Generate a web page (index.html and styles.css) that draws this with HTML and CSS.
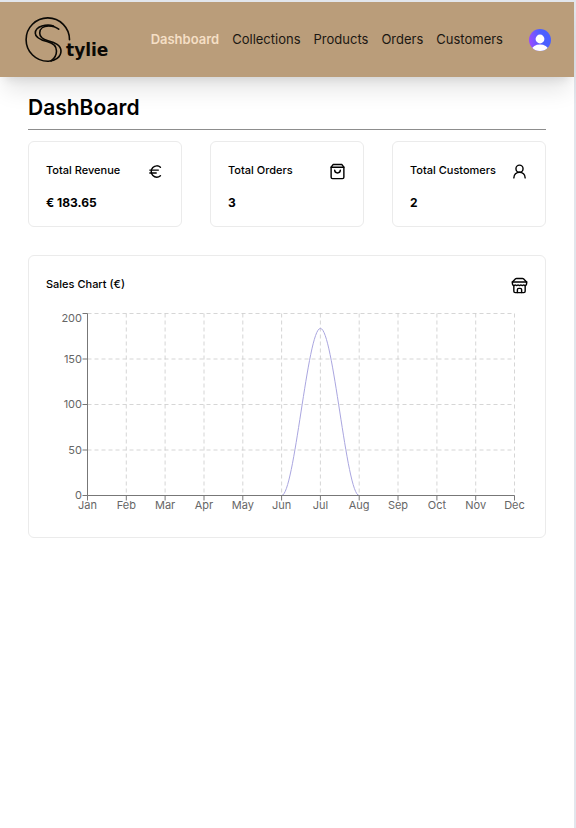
FILE: index.html
```html
<!DOCTYPE html>
<html lang="en">
<head>
<meta charset="utf-8">
<meta name="viewport" content="width=device-width, initial-scale=1">
<title>Stylie Dashboard</title>
<link rel="stylesheet" href="styles.css">
</head>
<body>
<div class="app">
  <header class="topbar">
    <a class="logo" href="#" aria-label="Stylie">
      <svg class="logo-mark" viewBox="0 0 46 46" fill="none" stroke="currentColor" stroke-width="1.6" stroke-linecap="round" aria-hidden="true">
        <path d="M44.500 22.800A21.700 21.700 0 1 0 23 44.300C30 44.500 36 40 36 34C36 28 30 25.800 23 23.800C17.500 22.200 14.700 19.500 14.700 16C14.700 11.500 18.500 9 23.700 9C28 9 31 10 33.700 12.200"/>
        <path d="M28.500 9C22 6.800 10.300 9 10.300 16.300C10.300 20.500 15 22.800 22 24.500C28 26 31.500 29.500 31.500 34C31.500 38.500 29.500 41.500 26 44"/>
      </svg>
      <span class="logo-text">tylie</span>
    </a>
    <nav class="nav">
      <a class="active" href="#">Dashboard</a>
      <a href="#">Collections</a>
      <a href="#">Products</a>
      <a href="#">Orders</a>
      <a href="#">Customers</a>
    </nav>
    <button class="avatar" type="button" aria-label="Account">
      <svg viewBox="0 0 22 22" aria-hidden="true">
        <defs>
          <linearGradient id="tint" x1="0" x2="1" y1="0.600" y2="0.400"><stop offset="0" stop-color="#9b4bff"/><stop offset="0.600" stop-color="#4a60ff"/></linearGradient>
          <clipPath id="disc"><circle cx="11" cy="11" r="11"/></clipPath>
        </defs>
        <g clip-path="url(#disc)">
          <rect width="22" height="22" fill="url(#tint)"/>
          <circle cx="11" cy="10" r="4.400" fill="#fff"/>
          <ellipse cx="11" cy="20.500" rx="8" ry="5" fill="#fff"/>
        </g>
      </svg>
    </button>
  </header>
  <main class="content">
    <h1>DashBoard</h1>
    <hr>
    <section class="stats">
      <article class="card">
        <div class="card-head">
          <h2>Total Revenue</h2>
          <svg class="icon" viewBox="0 0 24 24" aria-hidden="true"><path d="M4 10h12M4 14h9"/><path d="M19 6a7.700 7.700 0 0 0-5.200-2A7.900 7.900 0 0 0 6 12c0 4.400 3.500 8 7.800 8 2 0 3.800-.8 5.200-2"/></svg>
        </div>
        <p>€ 183.65</p>
      </article>
      <article class="card">
        <div class="card-head">
          <h2>Total Orders</h2>
          <svg class="icon" viewBox="0 0 24 24" aria-hidden="true"><path d="M6 2 3 6v14a2 2 0 0 0 2 2h14a2 2 0 0 0 2-2V6l-3-4Z"/><path d="M3 6h18"/><path d="M16 10a4 4 0 0 1-8 0"/></svg>
        </div>
        <p>3</p>
      </article>
      <article class="card">
        <div class="card-head">
          <h2>Total Customers</h2>
          <svg class="icon" viewBox="0 0 24 24" aria-hidden="true"><circle cx="12" cy="8" r="5"/><path d="M20 21a8 8 0 0 0-16 0"/></svg>
        </div>
        <p>2</p>
      </article>
    </section>
    <section class="card chart-card">
      <div class="card-head">
        <h2>Sales Chart (€)</h2>
        <svg class="icon" viewBox="0 0 24 24" aria-hidden="true"><path d="m2 7 4.410-4.410A2 2 0 0 1 7.830 2h8.340a2 2 0 0 1 1.420.590L22 7"/><path d="M4 12v8a2 2 0 0 0 2 2h12a2 2 0 0 0 2-2v-8"/><path d="M15 22v-4a2 2 0 0 0-2-2h-2a2 2 0 0 0-2 2v4"/><path d="M2 7h20"/><path d="M22 7v3a2 2 0 0 1-2 2 2.700 2.700 0 0 1-1.590-.630.700.700 0 0 0-.820 0A2.700 2.700 0 0 1 16 12a2.700 2.700 0 0 1-1.590-.630.700.700 0 0 0-.820 0A2.700 2.700 0 0 1 12 12a2.700 2.700 0 0 1-1.590-.630.700.700 0 0 0-.820 0A2.700 2.700 0 0 1 8 12a2.700 2.700 0 0 1-1.590-.630.700.700 0 0 0-.820 0A2.700 2.700 0 0 1 4 12a2 2 0 0 1-2-2V7"/></svg>
      </div>
      <svg class="chart" viewBox="0 0 482 214" role="img" aria-label="Sales by month">
        <path class="grid" d="M41.500 5.500H468.500M41.500 51H468.500M41.500 96.500H468.500M41.500 142H468.500"/>
        <path class="grid" d="M80.300 5.500V187.500M119.100 5.500V187.500M158 5.500V187.500M196.800 5.500V187.500M235.600 5.500V187.500M274.400 5.500V187.500M313.200 5.500V187.500M352 5.500V187.500M390.900 5.500V187.500M429.700 5.500V187.500M468.500 5.500V187.500"/>
        <path class="line" d="M41.500 187.500H235.600C248.500 187.500 261.500 20.400 274.400 20.400C287.300 20.400 300.300 187.500 313.200 187.500H468.500"/>
        <path class="axis" d="M41.500 5.500V187.500H468.500M36.500 5.500h5M36.500 51h5M36.500 96.500h5M36.500 142h5M36.500 187.500h5"/>
        <path class="axis" d="M41.500 187.500v5M80.300 187.500v5M119.100 187.500v5M158 187.500v5M196.800 187.500v5M235.600 187.500v5M274.400 187.500v5M313.200 187.500v5M352 187.500v5M390.900 187.500v5M429.700 187.500v5M468.500 187.500v5"/>
        <g class="y-labels">
          <text x="36" y="14">200</text><text x="36" y="55">150</text><text x="36" y="100">100</text><text x="36" y="146">50</text><text x="36" y="191">0</text>
        </g>
        <g class="x-labels">
          <text x="41.500" y="201">Jan</text><text x="80.300" y="201">Feb</text><text x="119.100" y="201">Mar</text><text x="158" y="201">Apr</text><text x="196.800" y="201">May</text><text x="235.600" y="201">Jun</text><text x="274.400" y="201">Jul</text><text x="313.200" y="201">Aug</text><text x="352" y="201">Sep</text><text x="390.900" y="201">Oct</text><text x="429.700" y="201">Nov</text><text x="468.500" y="201">Dec</text>
        </g>
      </svg>
    </section>
  </main>
</div>
</body>
</html>
```
FILE: styles.css
```css
* { box-sizing: border-box; }

body {
  margin: 0;
  font-family: Inter, "Liberation Sans", sans-serif;
  color: #020817;
  background: #fff;
}

.app {
  min-height: 100vh;
  border-top: 2px solid #e2e6ec;
  border-right: 2px solid #e2e6ec;
}

.topbar {
  display: flex;
  align-items: center;
  height: 75px;
  padding: 0 23px 0 25px;
  background: #ba9d7a;
  box-shadow: 0 18px 22px -5px rgba(0, 0, 0, 0.100), 0 7px 9px -5px rgba(0, 0, 0, 0.100);
}

.logo {
  display: flex;
  align-items: center;
  color: #0b0905;
  text-decoration: none;
}

.logo-mark { width: 46px; height: 46px; }

.logo-text {
  margin: 20px 0 0 -5px;
  font: bold 17px/20px "DejaVu Sans", sans-serif;
}

.nav {
  display: flex;
  gap: 13px;
  margin-left: auto;
  padding-bottom: 1px;
  font-size: 13px;
  line-height: 20px;
}

.nav a { color: #1b1712; text-decoration: none; }

.nav .active { color: #f5dfc5; font-weight: 600; }

.avatar {
  width: 22px;
  height: 22px;
  margin-left: 26px;
  padding: 0;
  border: 0;
  border-radius: 50%;
  background: none;
}

.avatar svg { display: block; width: 100%; height: 100%; }

.content { padding: 17px 28px; }

h1 {
  margin: 0;
  font-size: 21px;
  line-height: 28px;
  font-weight: 600;
  color: #000;
}

hr {
  height: 1px;
  margin: 7px 0 11px;
  border: 0;
  background: #8d8d8d;
}

.stats {
  display: grid;
  grid-template-columns: repeat(3, 1fr);
  gap: 28px;
}

.card {
  padding: 20px 17px 15px;
  border: 1px solid #ebebeb;
  border-radius: 6px;
}

.card-head {
  display: flex;
  align-items: flex-start;
  justify-content: space-between;
}

.card h2 {
  margin: 0;
  font-size: 11px;
  line-height: 16px;
  font-weight: 500;
  color: #000;
}

.card p {
  margin: 15px 0 0;
  font-size: 12px;
  line-height: 16px;
  font-weight: 700;
  color: #000;
}

.icon {
  width: 17px;
  height: 17px;
  margin-top: 1px;
  fill: none;
  stroke: #020202;
  stroke-width: 2;
  stroke-linecap: round;
  stroke-linejoin: round;
}

.chart-card { margin-top: 28px; }

.chart {
  display: block;
  width: 100%;
  margin-top: 14px;
  overflow: visible;
}

.grid { stroke: #ccc; stroke-width: 1; stroke-dasharray: 4 3; opacity: 0.800; }
.axis { fill: none; stroke: #777; stroke-width: 1; }
.line { fill: none; stroke: #aaa6e0; stroke-width: 1; }
.chart text { font-size: 11px; fill: #666; }
.y-labels { text-anchor: end; }
.x-labels { text-anchor: middle; }
```
